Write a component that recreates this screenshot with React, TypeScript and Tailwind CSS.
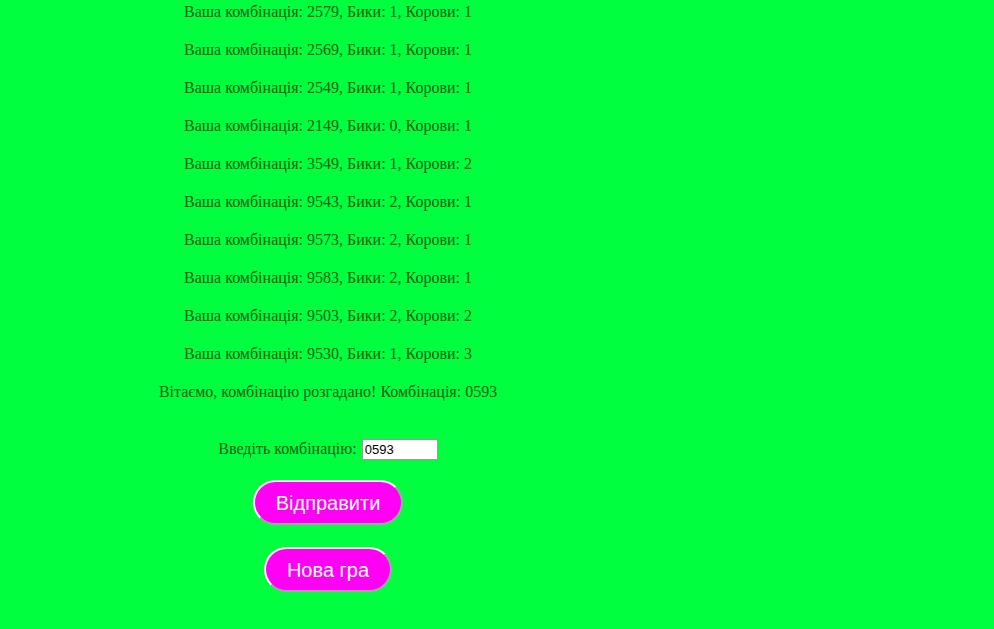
import React from "react";

const rows = [
  ["2579", 1, 1],
  ["2569", 1, 1],
  ["2549", 1, 1],
  ["2149", 0, 1],
  ["3549", 1, 2],
  ["9543", 2, 1],
  ["9573", 2, 1],
  ["9583", 2, 1],
  ["9503", 2, 2],
  ["9530", 1, 3],
];

export default function App() {
  return (
    <div className="min-h-[629px] w-full bg-[#00ff3f] text-[#0b5e12] [font-family:'Liberation_Serif',serif] text-[16px]">
      <div className="w-[66%] flex flex-col items-center text-center pt-[3px]">
        {rows.map(([c, b, k], i) => (
          <div key={i} className="leading-[18px] h-[18px] mb-[20px]">
            Ваша комбінація: {c}, Бики: {b}, Корови: {k}
          </div>
        ))}
        <div className="leading-[18px] h-[18px]">Вітаємо, комбінацію розгадано! Комбінація: 0593</div>
        <div className="mt-[37px] flex items-center h-[22px]">
          <span className="leading-[18px]">Введіть комбінацію:</span>
          <input
            readOnly
            value="0593"
            className="ml-[5px] w-[76px] h-[21px] bg-white border border-[#999] px-[2px] text-[13px] text-black [font-family:'Liberation_Sans',Arial,sans-serif] outline-none"
          />
        </div>
        <button className="mt-[20px] h-[45px] px-[21px] rounded-full bg-[#ff00f5] text-white text-[20px] [font-family:'Liberation_Sans',Arial,sans-serif] border-2 border-t-[#f4f4f4] border-l-[#f4f4f4] border-b-[#a9a0a9] border-r-[#a9a0a9]">
          Відправити
        </button>
        <button className="mt-[22px] h-[45px] px-[21px] rounded-full bg-[#ff00f5] text-white text-[20px] [font-family:'Liberation_Sans',Arial,sans-serif] border-2 border-t-[#f4f4f4] border-l-[#f4f4f4] border-b-[#a9a0a9] border-r-[#a9a0a9]">
          Нова гра
        </button>
      </div>
    </div>
  );
}
